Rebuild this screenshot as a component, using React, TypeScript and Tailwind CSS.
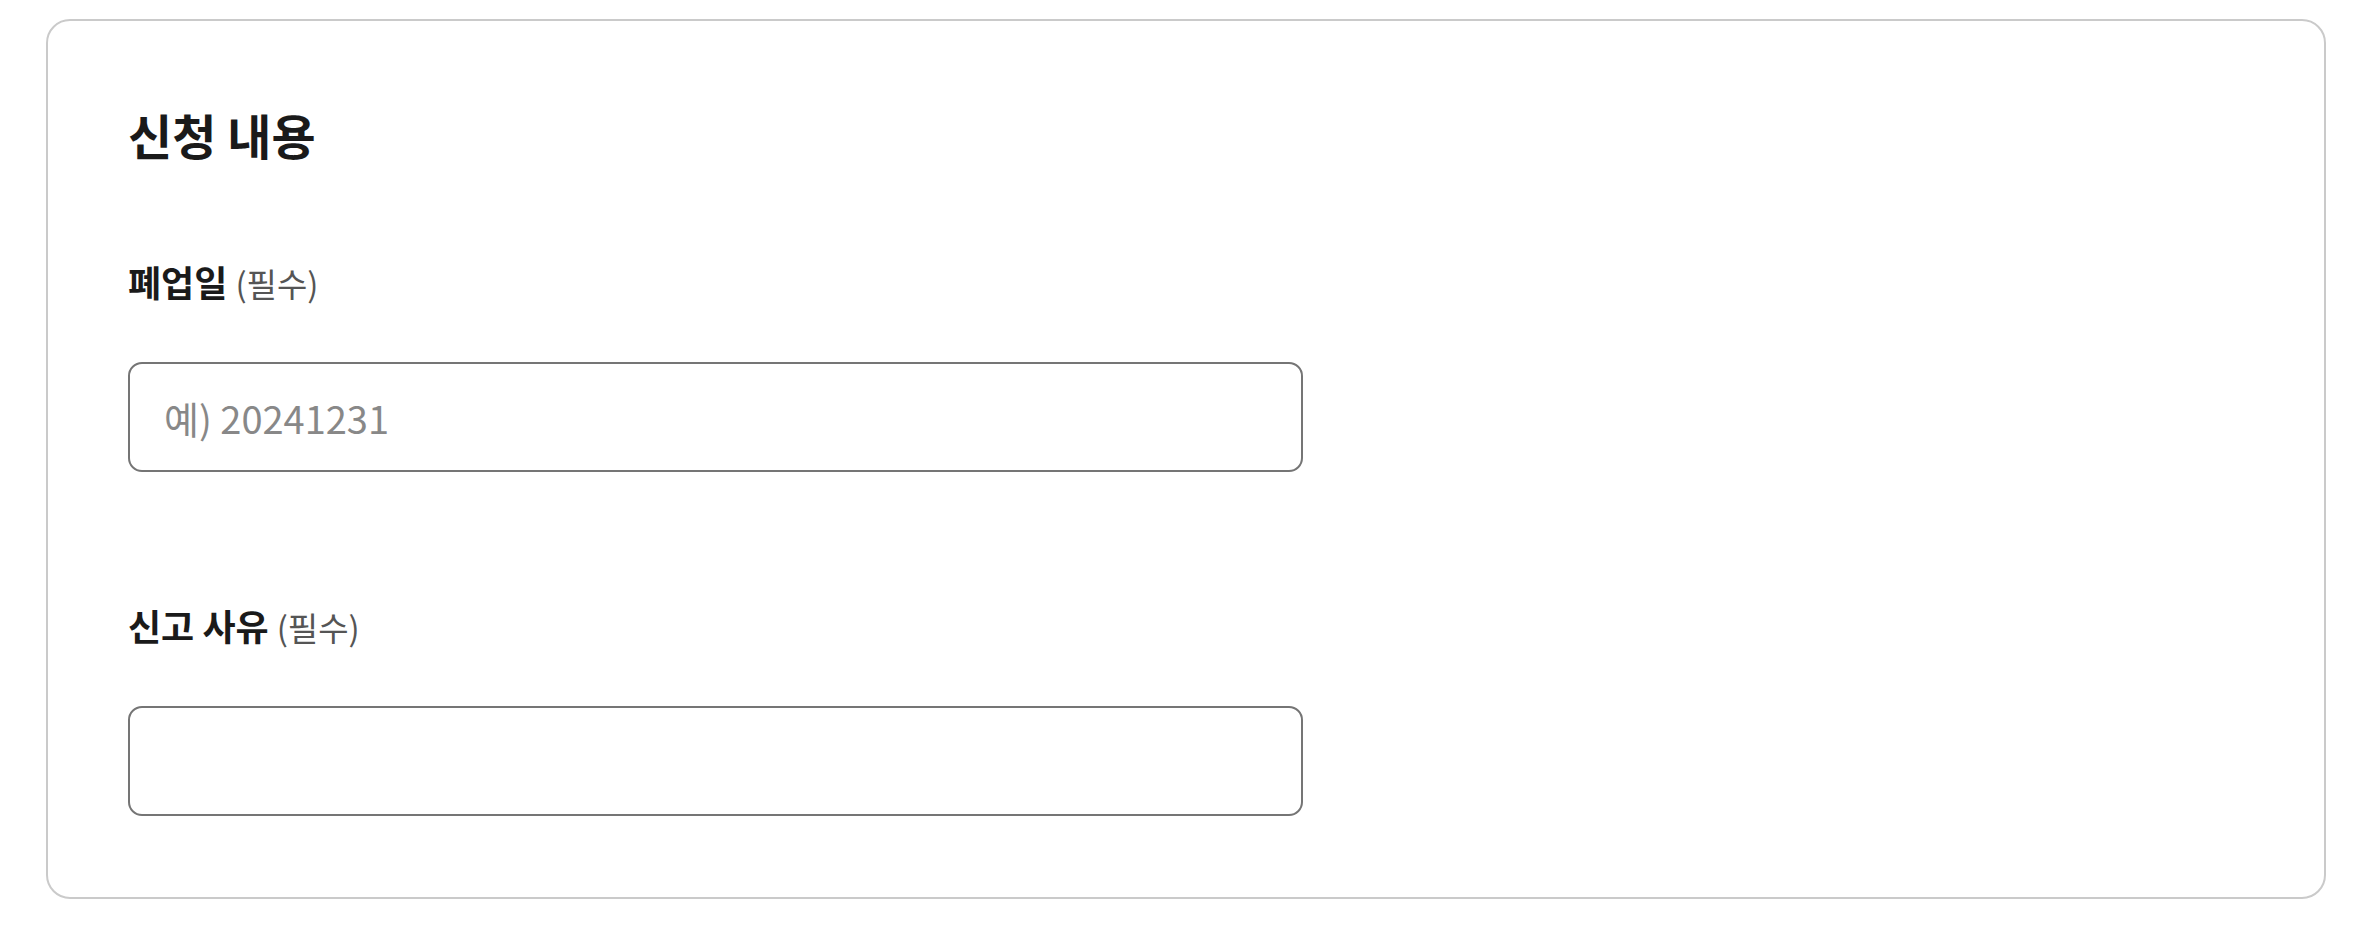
import React from "react";

const font = { fontFamily: '"Noto Sans CJK KR", "Noto Sans", sans-serif' };

function Field({ label, placeholder }: { label: string; placeholder?: string }) {
  return (
    <div className="flex flex-col">
      <div className="flex items-baseline gap-[8px] leading-[48px]">
        <span className="text-[36px] font-bold text-[#1a1a1a]">{label}</span>
        <span className="text-[33px] font-normal text-[#555555]">(필수)</span>
      </div>
      <input
        className="mt-[55px] h-[110px] w-[1175px] rounded-[14px] border-2 border-[#757575] bg-white px-[34px] text-[38px] text-[#1e1e1e] outline-none placeholder:text-[#888888]"
        style={font}
        placeholder={placeholder}
      />
    </div>
  );
}

export default function App() {
  return (
    <div className="min-h-screen bg-white pl-[46px] pt-[19px]" style={font}>
      <div className="w-[2280px] rounded-[24px] border-2 border-[#cacaca] bg-white px-[80px] pt-[83px] pb-[81px]">
        <h2 className="text-[48px] font-bold leading-[60px] text-[#1a1a1a]">신청 내용</h2>
        <div className="mt-[93px]">
          <Field label="폐업일" placeholder="예) 20241231" />
        </div>
        <div className="mt-[129px]">
          <Field label="신고 사유" />
        </div>
      </div>
    </div>
  );
}
